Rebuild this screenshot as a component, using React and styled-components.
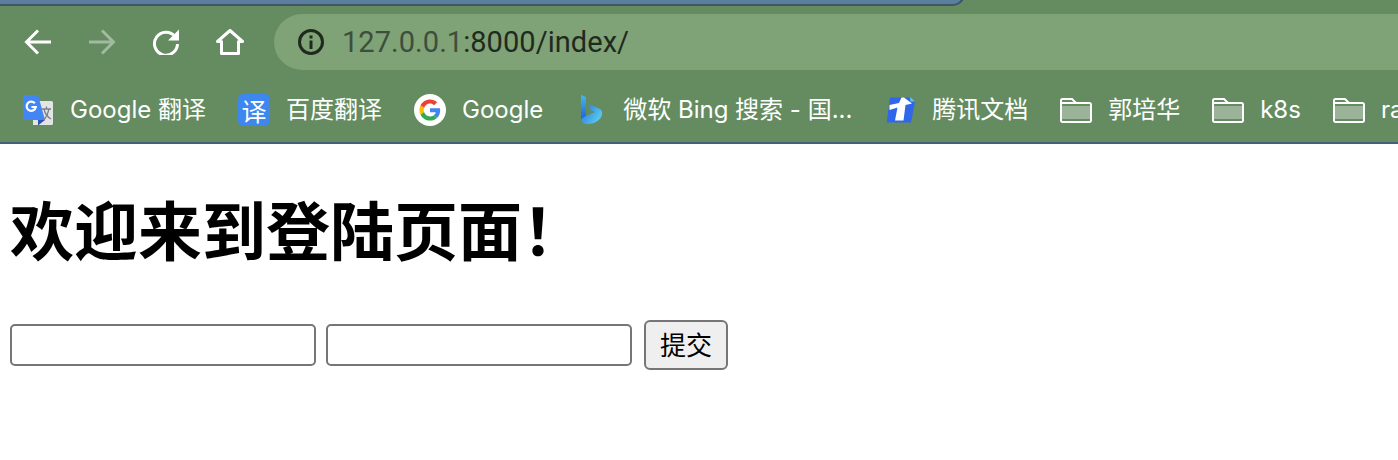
import React from 'react';
import styled, { createGlobalStyle } from 'styled-components';

const URL_FONT = `Roboto, "Noto Sans CJK SC", sans-serif`;
const BAR_FONT = `Inter, "Noto Sans CJK SC", sans-serif`;

const GlobalStyle = createGlobalStyle`
    html, body {
        margin: 0;
        padding: 0;
        background: #fff;
    }
    body {
        font-family: "Liberation Sans", "Noto Sans CJK SC", sans-serif;
    }
`;

const Page = styled.div`
    width: 1398px;
    height: 460px;
    overflow: hidden;
    background: #fff;
`;

const Chrome = styled.div`
    background: #648c60;
    border-bottom: 2px solid #44607a;
`;

const TabStrip = styled.div`
    height: 14px;
    overflow: hidden;
`;

const ActiveTab = styled.div`
    width: 966px;
    height: 26px;
    margin-top: -20px;
    box-sizing: border-box;
    background: #5c7f9e;
    border: solid #3e5668;
    border-width: 0 2px 2px 0;
    border-bottom-right-radius: 14px;
`;

const Toolbar = styled.div`
    display: flex;
    align-items: center;
    height: 56px;
    padding-left: 6px;
`;

const NavButton = styled.div`
    display: flex;
    justify-content: center;
    align-items: center;
    width: 64px;
    height: 56px;
    color: #fff;
    opacity: ${p => (p.$disabled ? 0.4 : 1)};
`;

const Omnibox = styled.div`
    flex: 1;
    display: flex;
    align-items: center;
    height: 56px;
    margin-left: 12px;
    padding-left: 23px;
    border-radius: 28px 0 0 28px;
    background: #7fa276;
`;

const Url = styled.div`
    margin-left: 17px;
    font-family: ${URL_FONT};
    font-size: 29px;
    letter-spacing: 0.05px;
    color: #1f2a1f;
    white-space: nowrap;
`;

const UrlHost = styled.span`
    color: #3d4f3c;
`;

const Bookmarks = styled.div`
    display: flex;
    align-items: center;
    gap: 32px;
    height: 72px;
    box-sizing: border-box;
    padding: 8px 0 0 22px;
    overflow: hidden;
`;

const Bookmark = styled.div`
    display: flex;
    flex-shrink: 0;
    align-items: center;
    gap: 16px;
    font-family: ${BAR_FONT};
    font-size: 24px;
    line-height: 32px;
    color: #fff;
    white-space: nowrap;
`;

const BookmarkIcon = styled.div`
    display: flex;
    flex-shrink: 0;
    justify-content: center;
    align-items: center;
    width: 32px;
    height: 32px;
`;

const BookmarkLabel = styled.span`
    display: block;
    width: ${p => p.$width || 'auto'};
`;

const BaiduIcon = styled.div`
    display: flex;
    justify-content: center;
    align-items: center;
    width: 32px;
    height: 32px;
    border-radius: 5px;
    background: #3d87ee;
    font-size: 25px;
    font-family: "Noto Sans CJK SC", sans-serif;
    line-height: 1;
    color: #fff;
`;

const Content = styled.main`
    padding-left: 10px;
`;

const Title = styled.h1`
    margin: 39px 0 0;
    height: 88px;
    font-family: "Noto Sans CJK SC", sans-serif;
    font-size: 64px;
    font-weight: 700;
    line-height: 88px;
    color: #000;
    white-space: nowrap;
`;

const LoginForm = styled.form`
    display: flex;
    align-items: center;
    gap: 10px;
    margin: 49px 0 0;
`;

const TextInput = styled.input`
    width: 306px;
    height: 42px;
    box-sizing: border-box;
    padding: 0 6px;
    border: 2px solid #767676;
    border-radius: 5px;
    background: #fff;
    outline: none;
`;

const SubmitButton = styled.button`
    width: 84px;
    height: 50px;
    box-sizing: border-box;
    margin-left: 2px;
    padding: 0 0 4px;
    border: 2px solid #767676;
    border-radius: 6px;
    background: #efefef;
    font-family: "Noto Sans CJK SC", sans-serif;
    font-size: 26px;
    color: #000;
`;

const ArrowIcon = ({ flip }) => (
    <svg width="28" height="26" viewBox="0 0 28 26" fill="none" stroke="currentColor" strokeWidth="3" style={flip ? { transform: 'scaleX(-1)' } : undefined}>
        <path d="M27 13H3M14 1.5 2.5 13 14 24.5" />
    </svg>
);

const ReloadIcon = () => (
    <svg width="28" height="26" viewBox="0 0 28 26" fill="none">
        <path d="M23 7.5A11.5 11.5 0 1 0 25.5 15" stroke="#fff" strokeWidth="3" />
        <path d="M27 0.5V11.5H16Z" fill="#fff" />
    </svg>
);

const HomeIcon = () => (
    <svg width="28" height="26" viewBox="0 0 28 26" fill="none" stroke="#fff" strokeWidth="3" strokeLinejoin="round">
        <path d="M1.5 12.5 14 1.5 26.5 12.5H22.5V24.5H5.5V12.5Z" />
    </svg>
);

const InfoIcon = () => (
    <svg width="28" height="28" viewBox="0 0 28 28" fill="none">
        <circle cx="14" cy="14" r="11.5" stroke="#1f2a1f" strokeWidth="3" />
        <rect x="12.5" y="12.5" width="3" height="8.5" fill="#1f2a1f" />
        <rect x="12.5" y="7.5" width="3" height="3" fill="#1f2a1f" />
    </svg>
);

const TranslateIcon = () => (
    <svg width="32" height="32" viewBox="0 0 32 32">
        <path d="M11 7H29.5A1.5 1.5 0 0 1 31 8.5V29.5A1.5 1.5 0 0 1 29.5 31H11Z" fill="#e4e4e4" />
        <path d="M2 1H16L23 26H2.5A1.5 1.5 0 0 1 1 24.5V2A1.5 1.5 0 0 1 2 1Z" fill="#4285f4" />
        <path d="M16 26H23L16 31.5Z" fill="#2c55b0" />
        <path d="M12.8 9.3A4.6 4.6 0 1 0 13.8 13H9.4" fill="none" stroke="#fff" strokeWidth="2.2" />
        <path d="M20 15H29M24.5 12.5V15M22 15C23 20 25.5 23 29 25M27 15C26 20 24.5 23 22 26" fill="none" stroke="#7a8088" strokeWidth="1.3" />
    </svg>
);

const GoogleIcon = () => (
    <svg width="32" height="32" viewBox="0 0 32 32">
        <circle cx="16" cy="16" r="16" fill="#fff" />
        <g transform="translate(5.4 5.4) scale(0.442)">
            <path fill="#EA4335" d="M24 9.5c3.54 0 6.71 1.22 9.21 3.6l6.85-6.85C35.9 2.38 30.47 0 24 0 14.62 0 6.51 5.38 2.56 13.22l7.98 6.19C12.43 13.72 17.74 9.5 24 9.5z" />
            <path fill="#4285F4" d="M46.98 24.55c0-1.57-.15-3.09-.38-4.55H24v9.02h12.94c-.58 2.96-2.26 5.48-4.78 7.18l7.73 6c4.51-4.18 7.09-10.36 7.09-17.65z" />
            <path fill="#FBBC05" d="M10.53 28.59c-.48-1.45-.76-2.99-.76-4.59s.27-3.14.76-4.59l-7.98-6.19C.92 16.46 0 20.12 0 24c0 3.88.92 7.54 2.56 10.78l7.97-6.19z" />
            <path fill="#34A853" d="M24 48c6.48 0 11.93-2.13 15.89-5.81l-7.73-6c-2.15 1.45-4.92 2.3-8.16 2.3-6.26 0-11.57-4.22-13.47-9.91l-7.98 6.19C6.51 42.62 14.62 48 24 48z" />
        </g>
    </svg>
);

const BingIcon = () => (
    <svg width="22" height="30" viewBox="0 0 22 30">
        <defs>
            <linearGradient id="bingTop" x1="0" y1="0" x2="0" y2="1">
                <stop offset="0" stopColor="#46b8f0" />
                <stop offset="1" stopColor="#1f5fd8" />
            </linearGradient>
            <linearGradient id="bingWave" x1="0" y1="0" x2="1" y2="0.6">
                <stop offset="0" stopColor="#2a6fdc" />
                <stop offset="1" stopColor="#56cbf0" />
            </linearGradient>
        </defs>
        <path d="M1 0 6 2V21L1 25Z" fill="url(#bingTop)" />
        <path d="M9 9 20 14C22 15 22 17 22 19C22 24 15 29 8 29C4 29 1 27 1 24L6 21 15 17 10.5 15Z" fill="url(#bingWave)" />
    </svg>
);

const TencentDocsIcon = () => (
    <svg width="30" height="26" viewBox="0 0 30 26">
        <path d="M5 0.5H25L30 4.5 26 25.5H1.7Z" fill="#2f66ea" />
        <path d="M25 0 30 4.5H25.5Z" fill="#62c8f2" />
        <path d="M4.5 8 14 6 16.5 0.5H19L27 6.5 20.5 8 18.5 23.5H10L12.5 10.5 4.5 13Z" fill="#fff" />
    </svg>
);

const FolderIcon = () => (
    <svg width="32" height="26" viewBox="0 0 32 26" fill="none">
        <rect x="2" y="9" width="28" height="13" fill="#9bb399" />
        <path d="M1 6V23.5A1.5 1.5 0 0 0 2.5 25H29.5A1.5 1.5 0 0 0 31 23.5V7.5A1.5 1.5 0 0 0 29.5 6H16L12 2H2.5A1.5 1.5 0 0 0 1 3.5V6H16" stroke="#fff" strokeWidth="2" />
    </svg>
);

const BOOKMARKS = [
    { label: 'Google 翻译', icon: <TranslateIcon /> },
    { label: '百度翻译', icon: <BaiduIcon>译</BaiduIcon> },
    { label: 'Google', icon: <GoogleIcon /> },
    { label: '微软 Bing 搜索 - 国...', icon: <BingIcon />, width: '229px' },
    { label: '腾讯文档', icon: <TencentDocsIcon /> },
    { label: '郭培华', icon: <FolderIcon /> },
    { label: 'k8s', icon: <FolderIcon /> },
    { label: 'ra', icon: <FolderIcon /> },
];

const App = () => (
    <Page>
        <GlobalStyle />
        <Chrome>
            <TabStrip>
                <ActiveTab />
            </TabStrip>
            <Toolbar>
                <NavButton><ArrowIcon /></NavButton>
                <NavButton $disabled><ArrowIcon flip /></NavButton>
                <NavButton><ReloadIcon /></NavButton>
                <NavButton><HomeIcon /></NavButton>
                <Omnibox>
                    <InfoIcon />
                    <Url><UrlHost>127.0.0.1</UrlHost>:8000/index/</Url>
                </Omnibox>
            </Toolbar>
            <Bookmarks>
                {BOOKMARKS.map(item => (
                    <Bookmark key={item.label}>
                        <BookmarkIcon>{item.icon}</BookmarkIcon>
                        <BookmarkLabel $width={item.width}>{item.label}</BookmarkLabel>
                    </Bookmark>
                ))}
            </Bookmarks>
        </Chrome>
        <Content>
            <Title>欢迎来到登陆页面！</Title>
            <LoginForm onSubmit={e => e.preventDefault()}>
                <TextInput type="text" />
                <TextInput type="text" />
                <SubmitButton type="submit">提交</SubmitButton>
            </LoginForm>
        </Content>
    </Page>
);

export default App;
